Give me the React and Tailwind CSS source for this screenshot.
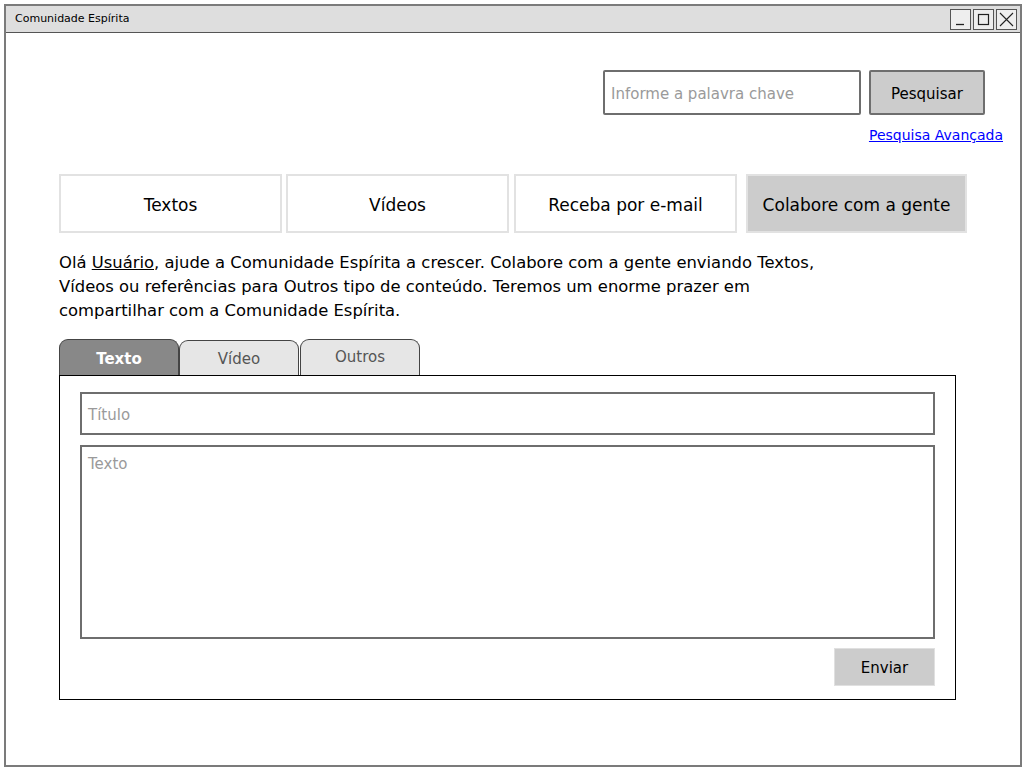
import React from "react";

const font = { fontFamily: '"DejaVu Sans", "Noto Sans", sans-serif' };

function WinBtn({ children }) {
  return (
    <div className="w-[21px] h-[21px] border border-[#555] bg-[#eeeeee] flex items-center justify-center">
      {children}
    </div>
  );
}

export default function App() {
  return (
    <div className="w-[1024px] h-[768px] bg-white relative overflow-hidden" style={font}>
      <div className="ml-[4px] mt-[4px] w-[1018px] h-[763px] border-2 border-[#7b7b7b] flex flex-col">
        {/* Title bar */}
        <div className="h-[27px] bg-[#dedede] border-b border-[#555] flex items-center justify-between pl-[9px] pr-[3px] shrink-0">
          <span className="text-[11px] font-medium text-black pt-[1px]">Comunidade Espírita</span>
          <div className="flex gap-[2px] items-center">
            <WinBtn>
              <svg width="13" height="13" viewBox="0 0 13 13"><line x1="2" y1="11.5" x2="10" y2="11.5" stroke="#222" strokeWidth="1.3" /></svg>
            </WinBtn>
            <WinBtn>
              <svg width="13" height="13" viewBox="0 0 13 13"><rect x="1.5" y="1.5" width="10" height="10" fill="none" stroke="#222" strokeWidth="1.2" /></svg>
            </WinBtn>
            <WinBtn>
              <svg width="15" height="15" viewBox="0 0 15 15"><path d="M1 1 L14 14 M14 1 L1 14" stroke="#222" strokeWidth="1.1" /></svg>
            </WinBtn>
          </div>
        </div>

        {/* Content */}
        <div className="flex-1 flex flex-col pl-[53px]">
          {/* Search */}
          <div className="flex flex-col items-end pt-[37px]">
            <div className="flex gap-[8px] pr-[35px]">
              <div className="w-[258px] h-[45px] border-2 border-[#6e6e6e] rounded-[2px] flex items-center pl-[6px] pt-[4px] text-[15px] text-[#9a9a9a]">
                Informe a palavra chave
              </div>
              <div className="w-[116px] h-[45px] border-2 border-[#6e6e6e] rounded-[2px] bg-[#cccccc] flex items-center justify-center pt-[4px] text-[15px] text-black">
                Pesquisar
              </div>
            </div>
            <div className="pr-[17px] mt-[10px] text-[14px] text-[#0000ff] underline leading-[20px]">Pesquisa Avançada</div>
          </div>

          {/* Nav */}
          <div className="flex mt-[29px] h-[59px]">
            <div className="w-[223px] border-2 border-[#e2e2e2] flex items-center justify-center pt-[4px] text-[17px] text-black">Textos</div>
            <div className="w-[223px] ml-[4px] border-2 border-[#e2e2e2] flex items-center justify-center pt-[4px] text-[17px] text-black">Vídeos</div>
            <div className="w-[223px] ml-[5px] border-2 border-[#e2e2e2] flex items-center justify-center pt-[4px] text-[17px] text-black">Receba por e-mail</div>
            <div className="w-[221px] ml-[9px] border-2 border-[#e2e2e2] bg-[#cccccc] flex items-center justify-center pt-[4px] text-[17px] text-black">Colabore com a gente</div>
          </div>

          {/* Paragraph */}
          <p className="mt-[18px] text-[16.4px] leading-[24px] text-black whitespace-nowrap">
            Olá <span className="underline">Usuário</span>, ajude a Comunidade Espírita a crescer. Colabore com a gente enviando Textos,
            <br />
            Vídeos ou referências para Outros tipo de conteúdo. Teremos um enorme prazer em
            <br />
            compartilhar com a Comunidade Espírita.
          </p>

          {/* Tabs */}
          <div className="flex mt-[16px] h-[36px] items-end">
            <div className="w-[120px] h-[36px] bg-[#888888] border border-[#444] border-b-0 rounded-t-[9px] flex items-center justify-center pt-[3px] text-[15px] font-bold text-white">Texto</div>
            <div className="w-[120px] h-[35px] bg-[#e6e6e6] border border-[#444] border-b-0 rounded-t-[9px] flex items-center justify-center pt-[2px] text-[15px] text-[#555]">Vídeo</div>
            <div className="w-[120px] h-[36px] ml-[1px] bg-[#e6e6e6] border border-[#444] border-b-0 rounded-t-[9px] flex items-center justify-center text-[15px] text-[#555]">Outros</div>
          </div>

          {/* Panel */}
          <div className="w-[897px] h-[325px] border border-black flex flex-col px-[20px] pt-[16px]">
            <div className="h-[43px] border-2 border-[#6e6e6e] flex items-center pl-[6px] pt-[3px] text-[15px] text-[#9a9a9a]">Título</div>
            <div className="h-[194px] mt-[10px] border-2 border-[#6e6e6e] pl-[6px] pt-[6px] text-[15px] text-[#9a9a9a]">Texto</div>
            <div className="flex justify-end mt-[9px]">
              <div className="w-[101px] h-[38px] bg-[#cccccc] border border-[#e0e0e0] flex items-center justify-center pt-[3px] text-[15px] text-black">Enviar</div>
            </div>
          </div>
        </div>
      </div>
    </div>
  );
}
